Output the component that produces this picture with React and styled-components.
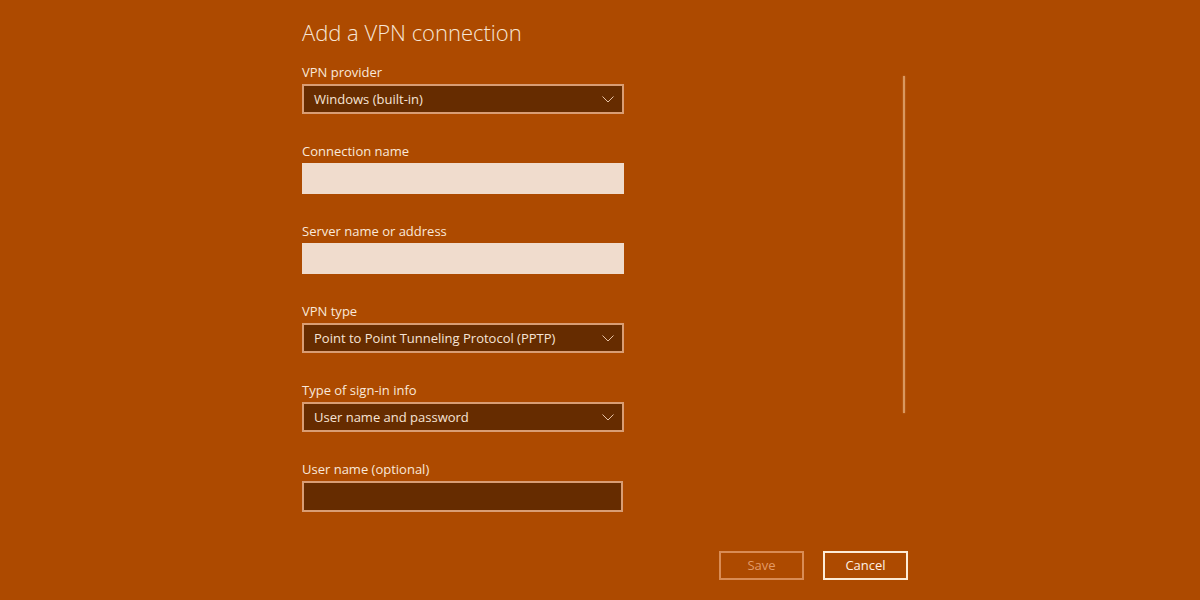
import React from "react";
import styled, { createGlobalStyle } from "styled-components";

const GlobalStyle = createGlobalStyle`
  html, body {
    margin: 0;
    padding: 0;
    background: #ad4a00;
  }
  body {
    font-family: "Open Sans", "Liberation Sans", sans-serif;
    -webkit-font-smoothing: antialiased;
  }
`;

const Chevron = () => (
    <svg width="12" height="7" viewBox="0 0 12 7" fill="none">
        <path d="M0.5 0.5 L6 6 L11.5 0.5" stroke="#e6c2a6" strokeWidth="1" />
    </svg>
);

const Select = ({ value }) => (
    <SelectBox>
        <span>{value}</span>
        <Chevron />
    </SelectBox>
);

const Field = ({ label, children }) => (
    <Group>
        <Label>{label}</Label>
        {children}
    </Group>
);

const App = () => {
    return (
        <Page>
            <GlobalStyle />
            <Panel>
                <Body>
                    <Form>
                        <Title>Add a VPN connection</Title>
                        <Field label="VPN provider">
                            <Select value="Windows (built-in)" />
                        </Field>
                        <Field label="Connection name">
                            <TextBox />
                        </Field>
                        <Field label="Server name or address">
                            <TextBox />
                        </Field>
                        <Field label="VPN type">
                            <Select value="Point to Point Tunneling Protocol (PPTP)" />
                        </Field>
                        <Field label="Type of sign-in info">
                            <Select value="User name and password" />
                        </Field>
                        <Field label="User name (optional)">
                            <TextBox dark />
                        </Field>
                    </Form>
                    <ScrollThumb />
                </Body>
                <Footer>
                    <Button disabled>Save</Button>
                    <Button primary>Cancel</Button>
                </Footer>
            </Panel>
        </Page>
    );
};

export default App;

const Page = styled.div`
  width: 1200px;
  height: 600px;
  overflow: hidden;
  background: #ad4a00;
  padding-left: 302px;
  box-sizing: border-box;
`;

const Panel = styled.div`
  width: 606px;
  display: flex;
  flex-direction: column;
`;

const Body = styled.div`
  display: flex;
  justify-content: space-between;
  align-items: flex-start;
`;

const Form = styled.div`
  width: 322px;
  padding-top: 16px;
  display: flex;
  flex-direction: column;
`;

const Title = styled.h1`
  margin: 0 0 13px;
  font-size: 22px;
  line-height: 32px;
  font-weight: 300;
  color: #f7e6d6;
`;

const Group = styled.div`
  display: flex;
  flex-direction: column;
  margin-bottom: 26px;
  &:last-child {
    margin-bottom: 0;
  }
`;

const Label = styled.div`
  font-size: 13px;
  line-height: 20px;
  padding-top: 1px;
  height: 20px;
  box-sizing: border-box;
  color: #f9e8da;
  margin-bottom: 3px;
`;

const SelectBox = styled.div`
  height: 30px;
  box-sizing: border-box;
  border: 2px solid #d99d74;
  background: #662c00;
  color: #f6e4d6;
  font-size: 13px;
  display: flex;
  align-items: center;
  justify-content: space-between;
  padding: 0 8px 0 10px;
`;

const TextBox = styled.div`
  height: 31px;
  box-sizing: border-box;
  width: ${p => (p.dark ? "321px" : "322px")};
  background: ${p => (p.dark ? "#662c00" : "#f0dccd")};
  border: ${p => (p.dark ? "2px solid #d99d74" : "none")};
`;

const ScrollThumb = styled.div`
  width: 2px;
  height: 337px;
  margin-top: 76px;
  margin-right: 3px;
  background: #d99860;
  box-shadow: 0 0 2px rgba(240, 180, 120, 0.5);
`;

const Footer = styled.div`
  display: flex;
  justify-content: flex-end;
  gap: 19px;
  margin-top: 39px;
`;

const Button = styled.div`
  width: 85px;
  height: 29px;
  box-sizing: border-box;
  display: flex;
  align-items: center;
  justify-content: center;
  font-size: 13px;
  padding-bottom: 1px;
  border: 2px solid ${p => (p.primary ? "#fdebd6" : "#d98c55")};
  color: ${p => (p.primary ? "#fff1e4" : "#e39a66")};
`;
